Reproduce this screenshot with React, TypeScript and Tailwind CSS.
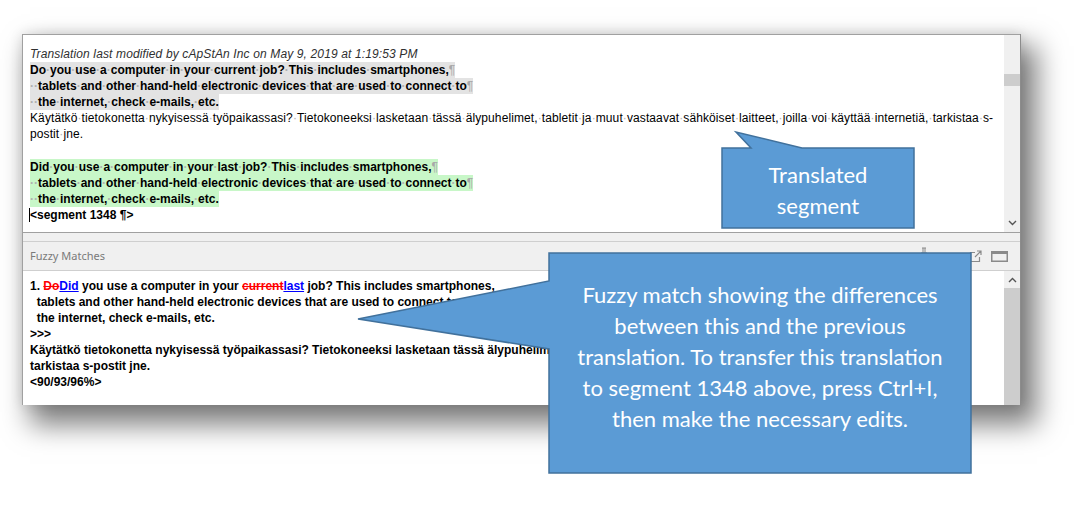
import React from "react";

const font = "font-['Liberation_Sans',Arial,sans-serif]";

// Word-style visible space markers
function Dotted({ text }: { text: string }) {
  const parts = text.split(" ");
  return (
    <>
      {parts.map((p, i) => (
        <React.Fragment key={i}>
          {i > 0 && <span className="text-[#b0b0b0]">·</span>}
          {p}
        </React.Fragment>
      ))}
    </>
  );
}

const Pilcrow = () => <span className="font-normal text-[#a8a8a8]">¶</span>;

const HiLine = ({ text, bg, mark = false }: { text: string; bg: string; mark?: boolean }) => (
  <div className="h-[16px] whitespace-nowrap">
    <span className={`inline-block h-[16px] font-bold ${bg}`}>
      <Dotted text={text} />
      {mark && <Pilcrow />}
    </span>
  </div>
);

const ChevronDown = () => (
  <svg width="9" height="6" viewBox="0 0 9 6" className="text-[#555]">
    <path d="M1 1 L4.5 4.5 L8 1" fill="none" stroke="currentColor" strokeWidth="1.4" />
  </svg>
);

const ChevronUp = () => (
  <svg width="9" height="6" viewBox="0 0 9 6" className="text-[#555]">
    <path d="M1 5 L4.5 1.5 L8 5" fill="none" stroke="currentColor" strokeWidth="1.4" />
  </svg>
);

function TranslationPane() {
  return (
    <div className="flex h-[199px] border-y border-[#a0a0a0]">
      <div className={`flex-1 overflow-hidden pl-[7px] pt-[11px] text-[12px] leading-[16px] text-black ${font}`}>
        <div className="h-[16px] whitespace-nowrap italic tracking-[0.13px] text-[#303030]">
          Translation last modified by cApStAn Inc on May 9, 2019 at 1:19:53 PM
        </div>
        <HiLine bg="bg-[#e3e3e3]" text="Do you use a computer in your current job? This includes smartphones," mark />
        <HiLine bg="bg-[#e3e3e3]" text="  tablets and other hand-held electronic devices that are used to connect to" mark />
        <HiLine bg="bg-[#e3e3e3]" text="  the internet, check e-mails, etc." />
        <div className="h-[16px] whitespace-nowrap tracking-[0.1px]">
          <Dotted text="Käytätkö tietokonetta nykyisessä työpaikassasi? Tietokoneeksi lasketaan tässä älypuhelimet, tabletit ja muut vastaavat sähköiset laitteet, joilla voi käyttää internetiä, tarkistaa s-" />
        </div>
        <div className="h-[16px] whitespace-nowrap tracking-[0.1px]">
          <Dotted text="postit jne." />
        </div>
        <div className="mt-[17px]">
          <HiLine bg="bg-[#c8f7c8]" text="Did you use a computer in your last job? This includes smartphones," mark />
          <HiLine bg="bg-[#c8f7c8]" text="  tablets and other hand-held electronic devices that are used to connect to" mark />
          <HiLine bg="bg-[#c8f7c8]" text="  the internet, check e-mails, etc." />
          <div className="h-[16px] whitespace-nowrap font-bold">
            <span className="-ml-px border-l border-black">&lt;segment 1348 ¶&gt;</span>
          </div>
        </div>
      </div>
      <div className="flex w-[16px] flex-col items-center bg-[#f0f0f0]">
        <div className="mt-[39px] h-[12px] w-full bg-[#cdcdcd]" />
        <div className="flex-1" />
        <div className="mb-[6px]">
          <ChevronDown />
        </div>
      </div>
    </div>
  );
}

function FuzzyHeader() {
  return (
    <div className="flex h-[30px] items-center border-y border-[#cfcfcf] bg-[#f0f0f0] pl-[7px] pr-[12px]">
      <span className="font-['Noto_Sans',sans-serif] text-[11px] text-[#7a7a7a]">Fuzzy Matches</span>
      <div className="flex-1" />
      {/* pin */}
      <svg width="10" height="12" viewBox="0 0 10 12" className="mr-[40px] mt-[-6px] text-[#8a8a8a]">
        <path d="M3 1 H7 M4 1 V6 M6 1 V6 M2 6 H8 M5 6 V11" fill="none" stroke="currentColor" strokeWidth="1" />
      </svg>
      {/* undock */}
      <svg width="13" height="13" viewBox="0 0 13 13" className="mr-[9px] text-[#8a8a8a]">
        <path d="M6 2.5 H1.5 V11.5 H10.5 V7" fill="none" stroke="currentColor" strokeWidth="1.2" />
        <path d="M6 7 L12 1 M8 1 H12 V5" fill="none" stroke="currentColor" strokeWidth="1.2" />
      </svg>
      {/* window */}
      <svg width="17" height="11" viewBox="0 0 17 11" className="text-[#8a8a8a]">
        <rect x="0.75" y="0.75" width="15.5" height="9.5" fill="none" stroke="currentColor" strokeWidth="1.5" />
        <rect x="1" y="1" width="15" height="2" fill="currentColor" />
      </svg>
    </div>
  );
}

function FuzzyPane() {
  const del = "text-[#ff0000] line-through";
  const ins = "text-[#0000ff] underline";
  return (
    <div className="flex flex-1 overflow-hidden">
      <div className={`flex-1 overflow-hidden whitespace-pre pl-[7px] pt-[7px] text-[12px] font-bold leading-[16px] text-black ${font}`}>
        <div>
          1. <span className={del}>Do</span>
          <span className={ins}>Did</span> you use a computer in your <span className={del}>current</span>
          <span className={ins}>last</span> job? This includes smartphones,
        </div>
        <div>  tablets and other hand-held electronic devices that are used to connect to</div>
        <div>  the internet, check e-mails, etc.</div>
        <div>&gt;&gt;&gt;</div>
        <div>
          Käytätkö tietokonetta nykyisessä työpaikassasi? Tietokoneeksi lasketaan tässä älypuhelimet, tabletit ja muut vastaavat sähköiset laitteet, joilla voi käyttää
        </div>
        <div>tarkistaa s-postit jne.</div>
        <div>&lt;90/93/96%&gt;</div>
      </div>
      <div className="flex w-[16px] flex-col items-center bg-[#f0f0f0]">
        <div className="mt-[6px] mb-[5px]">
          <ChevronUp />
        </div>
        <div className="w-full flex-1 bg-[#cdcdcd]" />
      </div>
    </div>
  );
}

function Callouts() {
  return (
    <>
      <svg width="1074" height="507" className="pointer-events-none absolute left-0 top-0">
        <path
          d="M722,148 L751,148 L736,132 L802,148 L914,148 L914,228 L722,228 Z"
          fill="#5b9bd5"
          stroke="#41719c"
          strokeWidth="1.5"
        />
        <path
          d="M549,253 L971,253 L971,473 L549,473 L549,349 L358,319 L549,281 Z"
          fill="#5b9bd5"
          stroke="#41719c"
          strokeWidth="1.5"
        />
      </svg>
      <div className="absolute left-[722px] top-[159px] w-[192px] text-center font-['Lato',sans-serif] text-[22px] leading-[31px] text-white">
        Translated
        <br />
        segment
      </div>
      <div className="absolute left-[549px] top-[279px] w-[422px] text-center font-['Lato',sans-serif] text-[22px] leading-[31px] text-white">
        Fuzzy match showing the differences
        <br />
        between this and the previous
        <br />
        translation. To transfer this translation
        <br />
        to segment 1348 above, press Ctrl+I,
        <br />
        then make the necessary edits.
      </div>
    </>
  );
}

export default function App() {
  return (
    <div className="relative h-[507px] w-[1074px] overflow-hidden bg-white pl-[22px] pt-[34px]">
      <div className="flex h-[371px] w-[999px] flex-col border-l border-r border-l-[#a0a0a0] border-r-[#8c8c8c] bg-white shadow-[0_0_12px_rgba(0,0,0,0.12),12px_16px_26px_4px_rgba(0,0,0,0.5)]">
        <TranslationPane />
        <div className="h-[8px] bg-[#f0f0f0]" />
        <FuzzyHeader />
        <FuzzyPane />
      </div>
      <Callouts />
    </div>
  );
}
